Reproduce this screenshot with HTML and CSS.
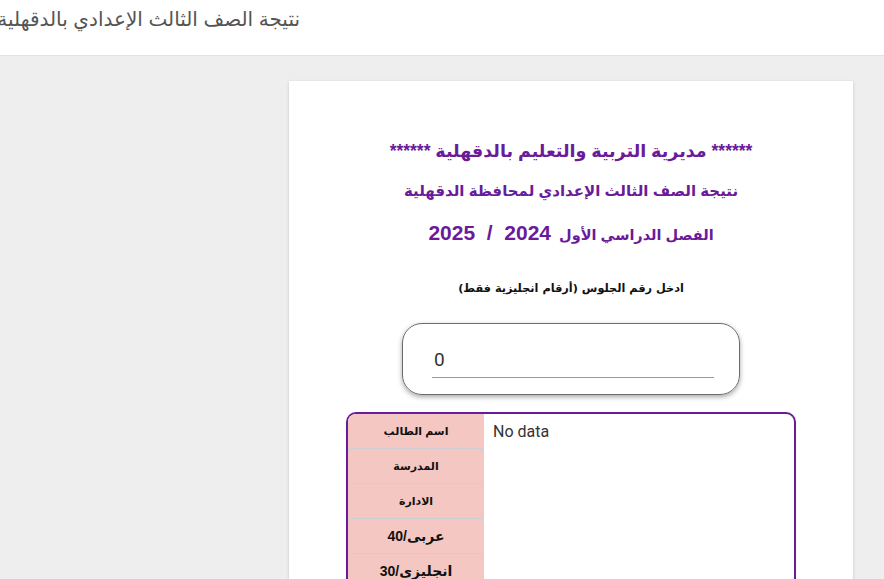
FILE: index.html
```html
<!DOCTYPE html>
<html lang="ar">
<head>
<meta charset="utf-8">
<title>نتيجة الصف الثالث الإعدادي بالدقهلية</title>
<link rel="stylesheet" href="styles.css">
</head>
<body>
<header class="topbar">
  <div class="site-title">نتيجة الصف الثالث الإعدادي بالدقهلية</div>
</header>
<main class="page">
  <section class="card">
    <h1 class="head head-1">****** مديرية التربية والتعليم بالدقهلية ******</h1>
    <h2 class="head head-2">نتيجة الصف الثالث الإعدادي لمحافظة الدقهلية</h2>
    <h3 class="head head-3">الفصل الدراسي الأول&nbsp; <span class="year">2024&nbsp; /&nbsp; 2025</span></h3>
    <p class="prompt">ادخل رقم الجلوس (أرقام انجليزية فقط)</p>
    <div class="input-box">
      <div class="input-field">0</div>
    </div>
    <div class="result">
      <div class="labels">
        <div class="label">اسم الطالب</div>
        <div class="label">المدرسة</div>
        <div class="label">الادارة</div>
        <div class="label big">عربى/40</div>
        <div class="label big">انجليزى/30</div>
      </div>
      <div class="values">No data</div>
    </div>
  </section>
</main>
</body>
</html>
```
FILE: styles.css
```css
html, body {
  margin: 0;
  padding: 0;
}
body {
  background: #eeeeee;
  font-family: "Liberation Sans", "DejaVu Sans", Arial, sans-serif;
  width: 884px;
  height: 579px;
  overflow: hidden;
}
.topbar {
  background: #ffffff;
  height: 56px;
  border-bottom: 1px solid #e2e2e2;
  box-sizing: border-box;
  display: flex;
}
.site-title {
  width: 300px;
  direction: rtl;
  text-align: right;
  white-space: nowrap;
  overflow: hidden;
  font-size: 20px;
  color: #555555;
  padding-top: 4px;
  line-height: 30px;
}
.page {
  padding: 25px 0 0 289px;
}
.card {
  width: 564px;
  min-height: 560px;
  background: #ffffff;
  box-shadow: 0 1px 3px rgba(0,0,0,0.18);
  direction: rtl;
  display: flex;
  flex-direction: column;
  align-items: center;
  padding-top: 55px;
  box-sizing: border-box;
}
.card > * {
  flex: none;
}
.head {
  margin: 0;
  color: #6a1b9a;
  font-weight: bold;
  text-align: center;
  font-family: "Liberation Sans", "DejaVu Sans", sans-serif;
}
.head-1 {
  font-size: 17.5px;
  line-height: 30px;
  height: 30px;
}
.head-2 {
  font-size: 15px;
  line-height: 30px;
  height: 30px;
  margin-top: 10px;
}
.head-3 {
  font-size: 14.5px;
  line-height: 34px;
  height: 34px;
  margin-top: 12px;
}
.year {
  font-size: 21px;
  line-height: 24px;
}
.prompt {
  margin: 27px 0 0;
  font-family: "DejaVu Sans", sans-serif;
  font-size: 11.3px;
  font-weight: bold;
  color: #111111;
  line-height: 20px;
  height: 20px;
}
.input-box {
  margin-top: 24px;
  width: 338px;
  height: 72px;
  box-sizing: border-box;
  border: 1px solid #6b6b6b;
  border-radius: 20px;
  box-shadow: 0 2px 5px rgba(0,0,0,0.35);
  display: flex;
  align-items: flex-start;
  direction: ltr;
  padding: 22px 25px 0 29px;
}
.input-field {
  flex: 1;
  height: 31px;
  border-bottom: 1px solid #9a9a9a;
  font-family: Roboto, sans-serif;
  font-size: 19px;
  color: #333333;
  line-height: 28px;
  padding-left: 2px;
}
.result {
  margin-top: 17px;
  width: 450px;
  height: 200px;
  box-sizing: border-box;
  border: 2px solid #6a1b9a;
  border-bottom: none;
  border-radius: 10px 10px 0 0;
  direction: ltr;
  display: flex;
  overflow: hidden;
}
.labels {
  flex: none;
  width: 136px;
  background: #f4c7c3;
  display: flex;
  flex-direction: column;
}
.label {
  flex: none;
  height: 35px;
  border-bottom: 1px solid #cfd0d6;
  box-sizing: border-box;
  display: flex;
  align-items: center;
  justify-content: center;
  direction: rtl;
  font-family: "Liberation Sans", "DejaVu Sans", sans-serif;
  font-size: 11px;
  font-weight: bold;
  color: #111111;
}
.label.big {
  font-size: 14px;
}
.values {
  flex: 1;
  padding: 8px 9px;
  font-family: Roboto, sans-serif;
  font-size: 16px;
  color: #333333;
}
```
